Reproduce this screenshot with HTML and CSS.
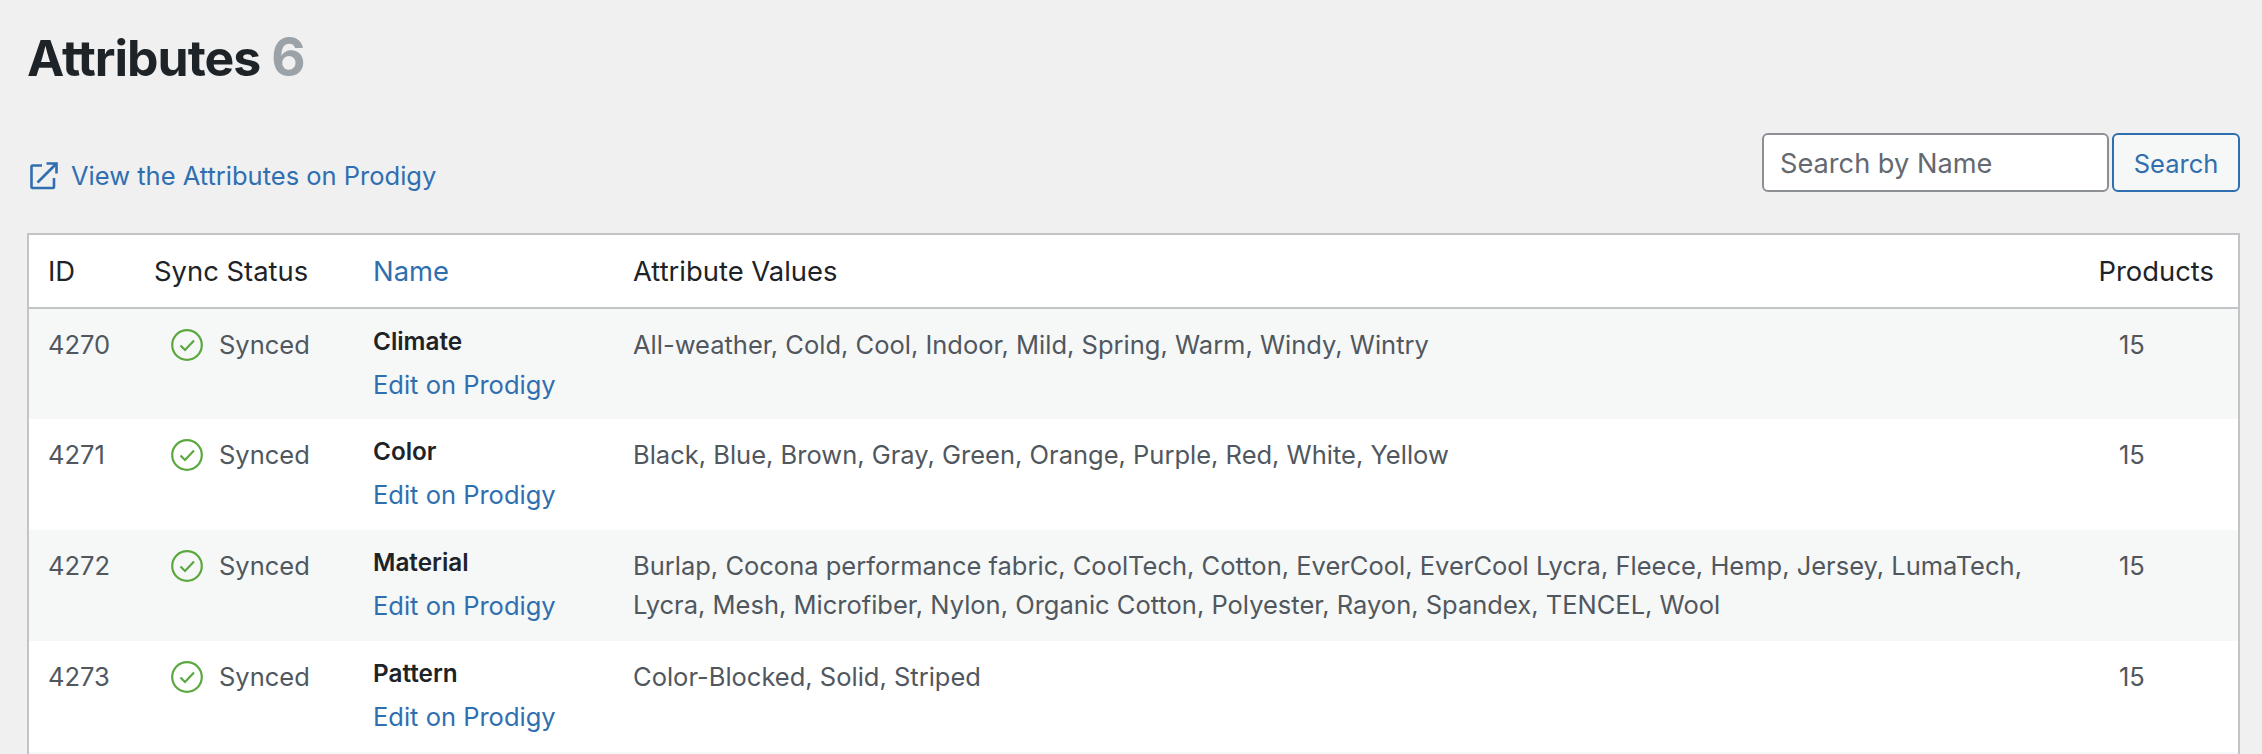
FILE: index.html
```html
<!doctype html>
<html>
<head>
<meta charset="utf-8">
<title>Attributes</title>
<link rel="stylesheet" href="styles.css">
</head>
<body>
<div class="wrap">
	<h1 class="title">Attributes <span class="count">6</span></h1>
	<div class="toolbar">
		<a class="view_link" href="#">
			<svg class="ext_icon" viewBox="0 0 28 28" fill="none" stroke="#2f6fb0" stroke-width="2.6"><path d="M12 3.5H2.5a1 1 0 0 0-1 1V25a1 1 0 0 0 1 1h20.5a1 1 0 0 0 1-1V16"/><path d="M7.5 20.5L25.5 2.5"/><path d="M16.5 1.5h10v10"/></svg>
			View the Attributes on Prodigy
		</a>
		<form class="search_box">
			<input class="search_input" type="text" placeholder="Search by Name">
			<button class="search_btn" type="button">Search</button>
		</form>
	</div>
	<table class="attr_table">
		<colgroup>
			<col class="col_id"><col class="col_sync"><col class="col_name"><col class="col_values"><col class="col_products">
		</colgroup>
		<thead>
			<tr>
				<th>ID</th>
				<th>Sync Status</th>
				<th><a href="#">Name</a></th>
				<th>Attribute Values</th>
				<th class="right">Products</th>
			</tr>
		</thead>
		<tbody>
			<tr>
				<td>4270</td>
				<td><span class="sync"><svg class="ok_icon" viewBox="0 0 32 32" fill="none" stroke="#5aa83f" stroke-width="2.2"><circle cx="16" cy="16" r="14.8"/><path d="M9.5 16.5l4.5 4.5 9-9.5"/></svg>Synced</span></td>
				<td><strong class="attr_name">Climate</strong><a class="edit_link" href="#">Edit on Prodigy</a></td>
				<td>All-weather, Cold, Cool, Indoor, Mild, Spring, Warm, Windy, Wintry</td>
				<td class="num">15</td>
			</tr>
			<tr>
				<td>4271</td>
				<td><span class="sync"><svg class="ok_icon" viewBox="0 0 32 32" fill="none" stroke="#5aa83f" stroke-width="2.2"><circle cx="16" cy="16" r="14.8"/><path d="M9.5 16.5l4.5 4.5 9-9.5"/></svg>Synced</span></td>
				<td><strong class="attr_name">Color</strong><a class="edit_link" href="#">Edit on Prodigy</a></td>
				<td>Black, Blue, Brown, Gray, Green, Orange, Purple, Red, White, Yellow</td>
				<td class="num">15</td>
			</tr>
			<tr>
				<td>4272</td>
				<td><span class="sync"><svg class="ok_icon" viewBox="0 0 32 32" fill="none" stroke="#5aa83f" stroke-width="2.2"><circle cx="16" cy="16" r="14.8"/><path d="M9.5 16.5l4.5 4.5 9-9.5"/></svg>Synced</span></td>
				<td><strong class="attr_name">Material</strong><a class="edit_link" href="#">Edit on Prodigy</a></td>
				<td>Burlap, Cocona performance fabric, CoolTech, Cotton, EverCool, EverCool Lycra, Fleece, Hemp, Jersey, LumaTech, Lycra, Mesh, Microfiber, Nylon, Organic Cotton, Polyester, Rayon, Spandex, TENCEL, Wool</td>
				<td class="num">15</td>
			</tr>
			<tr>
				<td>4273</td>
				<td><span class="sync"><svg class="ok_icon" viewBox="0 0 32 32" fill="none" stroke="#5aa83f" stroke-width="2.2"><circle cx="16" cy="16" r="14.8"/><path d="M9.5 16.5l4.5 4.5 9-9.5"/></svg>Synced</span></td>
				<td><strong class="attr_name">Pattern</strong><a class="edit_link" href="#">Edit on Prodigy</a></td>
				<td>Color-Blocked, Solid, Striped</td>
				<td class="num">15</td>
			</tr>
			<tr class="next_row"><td colspan="5"></td></tr>
		</tbody>
	</table>
</div>
</body>
</html>
```
FILE: styles.css
```css
* {margin: 0; padding: 0; box-sizing: border-box;}
html, body {
	height: 754px;
	overflow: hidden;
}
body {
	background: #f0f0f1;
	color: #1d2327;
	font-family: Inter, "Liberation Sans", sans-serif;
	font-size: 25.5px;
}
a {
	color: #2f6fb0;
	text-decoration: none;
}
.wrap {
	padding: 27px 22px 0 27px;
}
.title {
	font-size: 50px;
	line-height: 60px;
	font-weight: 700;
	letter-spacing: -1px;
}
.count {
	color: #9ca3a8;
	font-size: 53px;
}
.toolbar {
	display: flex;
	justify-content: space-between;
	align-items: flex-start;
	margin-top: 45px;
	height: 100px;
}
.view_link {
	display: flex;
	align-items: center;
	gap: 13px;
	margin: 27px 0 0 3px;
	line-height: 32px;
}
.ext_icon {
	width: 28px;
	height: 28px;
}
.search_box {
	display: flex;
	gap: 3px;
}
.search_input {
	width: 347px;
	height: 59px;
	padding: 1px 16px 0;
	background: #fff;
	border: 2px solid #8c8f94;
	border-radius: 6px;
	font: inherit;
	font-size: 27.2px;
	color: #2c3338;
}
.search_input::placeholder {
	color: #646970;
	opacity: 1;
}
.search_btn {
	width: 128px;
	height: 59px;
	padding-top: 1px;
	background: #f6f7f7;
	border: 2px solid #2f6fb0;
	border-radius: 6px;
	color: #2f6fb0;
	font: inherit;
}
.attr_table {
	width: 100%;
	table-layout: fixed;
	border-collapse: collapse;
	background: #fff;
	border: 2px solid #c3c4c7;
}
.col_id {width: 106px;}
.col_sync {width: 219px;}
.col_name {width: 260px;}
.col_products {width: 190px;}
.attr_table th {
	height: 74px;
	padding: 0 20px 1px;
	font-size: 27.4px;
	font-weight: 400;
	text-align: left;
	border-bottom: 2px solid #c3c4c7;
}
.attr_table th:first-child,
.attr_table td:first-child {
	padding-left: 19px;
}
.attr_table th.right {
	text-align: right;
	padding-right: 24px;
}
.attr_table td {
	height: 111px;
	padding: 16px 20px 0;
	vertical-align: top;
	color: #50575e;
	line-height: 39px;
}
.attr_table tbody tr:nth-child(odd) {
	background: #f6f7f7;
}
.attr_table td.num {
	padding-left: 70px;
}
.sync {
	display: flex;
	align-items: center;
	gap: 16px;
	margin-left: 17px;
}
.ok_icon {
	width: 32px;
	height: 32px;
	flex: none;
}
.attr_name {
	display: block;
	margin-bottom: 7px;
	color: #1d2327;
	font-size: 24.3px;
	font-weight: 600;
	line-height: 32px;
}
.edit_link {
	display: block;
	line-height: 42px;
}
```
